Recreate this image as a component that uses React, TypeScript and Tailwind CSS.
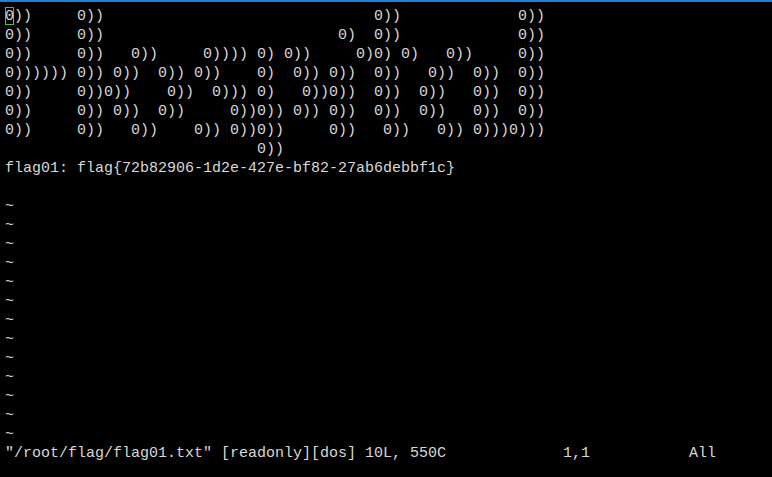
import React from "react";

type Tok = [number, string];

// lay tokens out at terminal columns
function place(toks: Tok[]) {
  let s = "";
  for (const [col, text] of toks) {
    s = s.padEnd(col, " ") + text;
  }
  return s;
}

const art: Tok[][] = [
  [[0, "0))"], [8, "0))"], [41, "0))"], [57, "0))"]],
  [[0, "0))"], [8, "0))"], [37, "0)"], [41, "0))"], [57, "0))"]],
  [[0, "0))"], [8, "0))"], [14, "0))"], [22, "0))))"], [28, "0)"], [31, "0))"], [39, "0)0)"], [44, "0)"], [49, "0))"], [57, "0))"]],
  [[0, "0))))))"], [8, "0))"], [12, "0))"], [17, "0))"], [21, "0))"], [28, "0)"], [32, "0))"], [36, "0))"], [41, "0))"], [47, "0))"], [52, "0))"], [57, "0))"]],
  [[0, "0))"], [8, "0))0))"], [18, "0))"], [23, "0)))"], [28, "0)"], [33, "0))0))"], [41, "0))"], [46, "0))"], [52, "0))"], [57, "0))"]],
  [[0, "0))"], [8, "0))"], [12, "0))"], [17, "0))"], [25, "0))0))"], [32, "0))"], [36, "0))"], [41, "0))"], [46, "0))"], [52, "0))"], [57, "0))"]],
  [[0, "0))"], [8, "0))"], [14, "0))"], [21, "0))"], [25, "0))0))"], [36, "0))"], [42, "0))"], [48, "0))"], [52, "0)))0)))"]],
  [[28, "0))"]],
];

const status = place([
  [0, '"/root/flag/flag01.txt" [readonly][dos] 10L, 550C'],
  [62, "1,1"],
  [76, "All"],
]);

function Row({ children }: { children?: React.ReactNode }) {
  return <div className="h-[19px] leading-[19px] whitespace-pre">{children}</div>;
}

export default function App() {
  const lines = art.map(place);
  const tildes = Array.from({ length: 13 });

  return (
    <div className="w-[772px] h-[477px] bg-black overflow-hidden flex flex-col">
      <div className="h-[2px] bg-[#1b82dc]" />
      <div className="pt-[5px] pl-[5px] text-[15px] text-[#d8d8d8] font-['Liberation_Mono',monospace]">
        {lines.map((l, i) =>
          i === 0 ? (
            <Row key={i}>
              <span className="inline-block w-[9px] h-[18px] ring-1 ring-inset ring-[#3cc83c]">{l[0]}</span>
              {l.slice(1)}
            </Row>
          ) : (
            <Row key={i}>{l}</Row>
          )
        )}
        <Row>flag01: flag{"{"}72b82906-1d2e-427e-bf82-27ab6debbf1c{"}"}</Row>
        <Row />
        {tildes.map((_, i) => (
          <Row key={"t" + i}>~</Row>
        ))}
        <Row>{status}</Row>
      </div>
    </div>
  );
}
